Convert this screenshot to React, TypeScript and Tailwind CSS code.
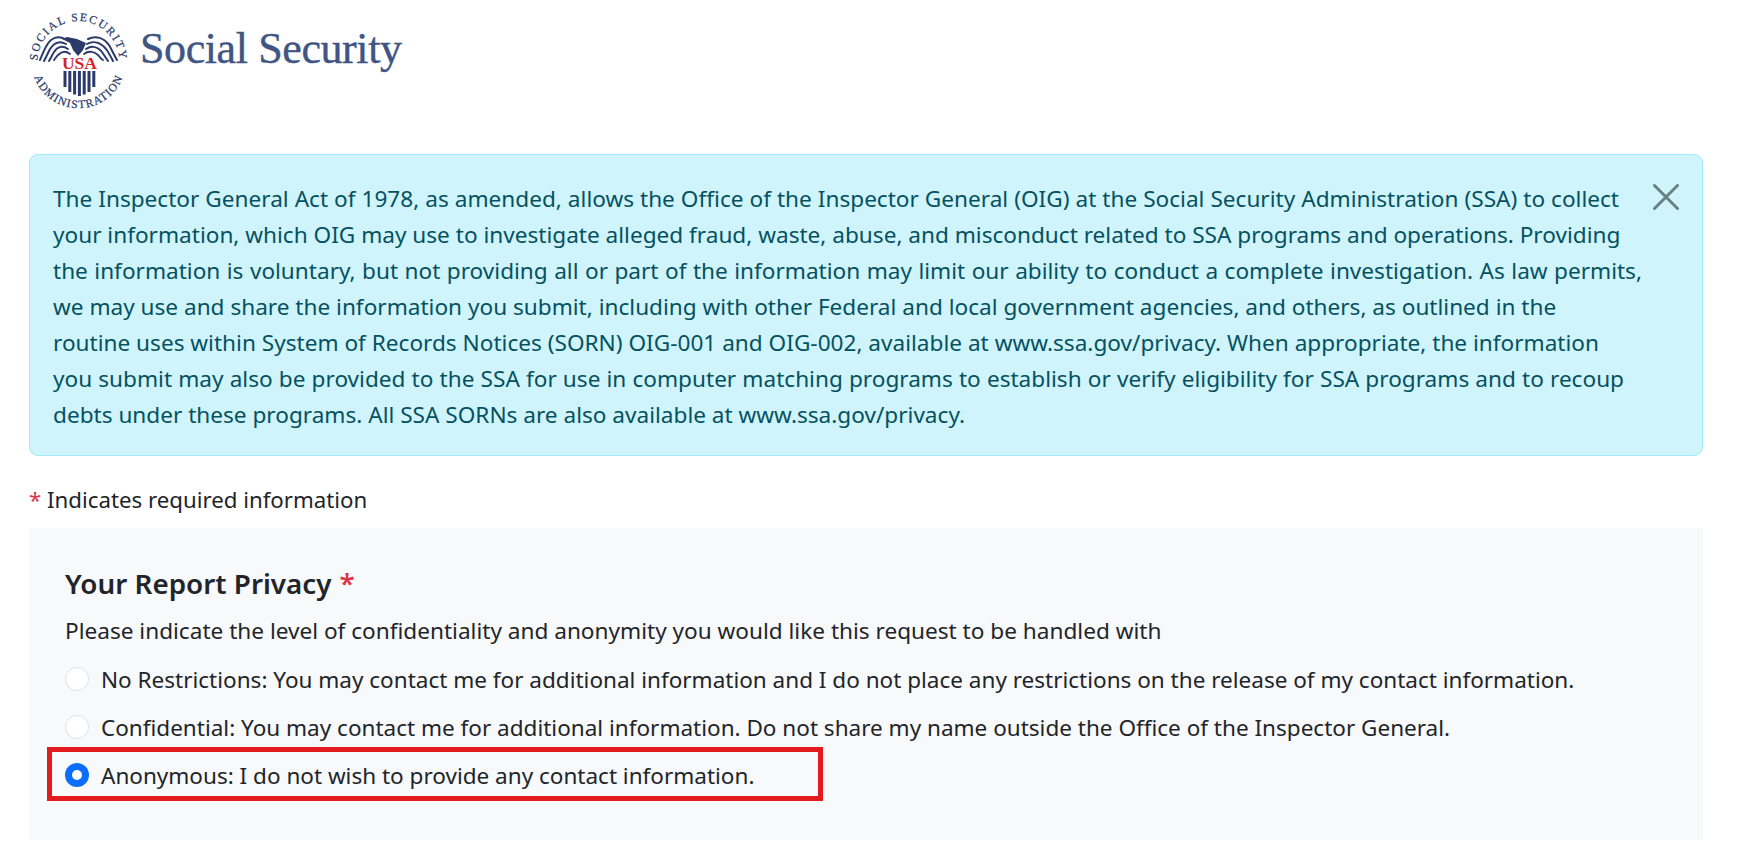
import React from "react";

const noticeLines = [
  { text: "The Inspector General Act of 1978, as amended, allows the Office of the Inspector General (OIG) at the Social Security Administration (SSA) to collect", width: "w-[1566px]" },
  { text: "your information, which OIG may use to investigate alleged fraud, waste, abuse, and misconduct related to SSA programs and operations. Providing", width: "w-[1560px]" },
  { text: "the information is voluntary, but not providing all or part of the information may limit our ability to conduct a complete investigation. As law permits,", width: "w-[1589px]" },
  { text: "we may use and share the information you submit, including with other Federal and local government agencies, and others, as outlined in the", width: "w-[1496px]" },
  { text: "routine uses within System of Records Notices (SORN) OIG-001 and OIG-002, available at www.ssa.gov/privacy. When appropriate, the information", width: "w-[1546px]" },
  { text: "you submit may also be provided to the SSA for use in computer matching programs to establish or verify eligibility for SSA programs and to recoup", width: "w-[1571px]" },
  { text: "debts under these programs. All SSA SORNs are also available at www.ssa.gov/privacy.", width: "w-[912px]" },
];

const options = [
  { label: "No Restrictions: You may contact me for additional information and I do not place any restrictions on the release of my contact information.", checked: false },
  { label: "Confidential: You may contact me for additional information. Do not share my name outside the Office of the Inspector General.", checked: false },
  { label: "Anonymous: I do not wish to provide any contact information.", checked: true },
];

const Seal = () => (
  <svg width="100" height="100" viewBox="0 0 100 100" className="shrink-0 overflow-visible">
    <defs>
      <path id="sealTop" d="M8.8 55 A41 41 0 1 1 90.2 55" />
      <path id="sealBottom" d="M3 56 A47 47 0 0 0 96 56" />
    </defs>
    <text fontFamily="'Liberation Serif', serif" fontSize="11.5" fill="#2b3a6b" stroke="#2b3a6b" strokeWidth="0.25" letterSpacing="1.7">
      <textPath href="#sealTop" startOffset="50%" textAnchor="middle">SOCIAL SECURITY</textPath>
    </text>
    <text fontFamily="'Liberation Serif', serif" fontSize="11.5" fill="#2b3a6b" stroke="#2b3a6b" strokeWidth="0.25" letterSpacing="1.2">
      <textPath href="#sealBottom" startOffset="50%" textAnchor="middle">ADMINISTRATION</textPath>
    </text>
    {/* wings */}
    <g fill="none" stroke="#2b3a6b" strokeLinecap="round">
      <path d="M36 27 C29 23 22 26 18 33 C15 38 13 43 11 48" strokeWidth="2" />
      <path d="M37 32 C30 28 25 31 21 37 C19 41 17 45 15 49" strokeWidth="2" />
      <path d="M39 37 C33 33 28 35 25 40 C23 43 22 46 20 49" strokeWidth="2" />
      <path d="M41 42 C36 38 32 40 29 43 C27 45 26 47 25 48" strokeWidth="1.8" />
      <path d="M59 27 C67 23 75 26 80 33 C83 38 85 43 88 48" strokeWidth="2" />
      <path d="M58 32 C65 28 72 31 77 37 C80 41 82 45 84 49" strokeWidth="2" />
      <path d="M57 37 C63 33 69 35 73 40 C75 43 77 46 79 49" strokeWidth="2" />
      <path d="M55 42 C60 38 66 40 69 43 C71 45 72 47 74 48" strokeWidth="1.8" />
    </g>
    <path d="M33 27 L38 25 L48 27 L57 31 L54 38 L49 44 L44 38 L41 31 L37 29 Z" fill="#2b3a6b" />
    <text x="50.5" y="56.5" textAnchor="middle" fontFamily="'Liberation Serif', serif" fontWeight="700" fontSize="17.5" fill="#d3232a">USA</text>
    {/* shield */}
    <g fill="#2b3a6b">
      <rect x="34.5" y="59" width="3" height="16" />
      <rect x="39.3" y="59" width="3" height="21" />
      <rect x="44.1" y="59" width="3" height="23.5" />
      <rect x="48.9" y="59" width="3" height="25" />
      <rect x="53.7" y="59" width="3" height="23.5" />
      <rect x="58.5" y="59" width="3" height="21" />
      <rect x="63.3" y="59" width="3" height="16" />
    </g>
  </svg>
);

const Radio = ({ checked }: { checked: boolean }) => (
  <span
    className={
      checked
        ? "w-6 h-6 -mt-[2px] rounded-full bg-[#0d6efd] flex items-center justify-center shrink-0"
        : "w-6 h-6 -mt-[2px] rounded-full bg-white border border-[#dee2e6] shrink-0"
    }
  >
    {checked && <span className="w-[10px] h-[10px] rounded-full bg-white" />}
  </span>
);

export default function App() {
  return (
    <div className="h-[852px] overflow-hidden bg-white pl-[29px] pr-[34px] text-[#212529] font-['Noto_Sans','Open_Sans',sans-serif] text-[22.6px]">
      <div className="flex items-start h-[154px] pt-[12px]">
        <Seal />
        <span className="ml-[11px] mt-[15px] font-['Liberation_Serif',serif] text-[44px] leading-none text-[#3f5583] tracking-[-0.4px] [-webkit-text-stroke:0.4px_#3f5583]">
          Social Security
        </span>
      </div>

      <div className="flex justify-between h-[302px] rounded-[9px] border border-[#9eeaf9] bg-[#cff4fc] pl-[23px] pr-[23px] pt-[26px] text-[#055160]">
        <div className="leading-[36px] whitespace-nowrap">
          {noticeLines.map((line) => (
            <div key={line.text} className={`${line.width} [text-align-last:justify]`}>
              {line.text}
            </div>
          ))}
        </div>
        <svg width="26" height="26" viewBox="0 0 26 26" className="mt-[3px] shrink-0">
          <path d="M1.5 1.5 L24.5 24.5 M24.5 1.5 L1.5 24.5" stroke="#6a8085" strokeWidth="3" strokeLinecap="round" />
        </svg>
      </div>

      <div className="h-[72px] pt-[26px] leading-[36px] text-[22.25px]">
        <span className="text-[#dc3545]">*</span> Indicates required information
      </div>

      <div className="h-[312px] bg-[#f8f9fa] pl-[36px] pt-[35px]">
        <h2 className="text-[27.8px] font-semibold leading-[40px] flex gap-[8px]">
          Your Report Privacy <span className="text-[#dc3545]">*</span>
        </h2>
        <p className="mt-[10px] leading-[36px]">
          Please indicate the level of confidentiality and anonymity you would like this request to be handled with
        </p>
        <div className="mt-[13px] flex flex-col gap-[12px] text-[22.53px]">
          {options.map((option) => (
            <label key={option.label} className="relative flex items-center gap-[12px] h-[36px] whitespace-nowrap">
              <Radio checked={option.checked} />
              <span>{option.label}</span>
              {option.checked && (
                <span className="absolute left-[-18px] top-[-11px] w-[776px] h-[54px] border-[5px] border-[#e31b1f]" />
              )}
            </label>
          ))}
        </div>
      </div>
    </div>
  );
}
